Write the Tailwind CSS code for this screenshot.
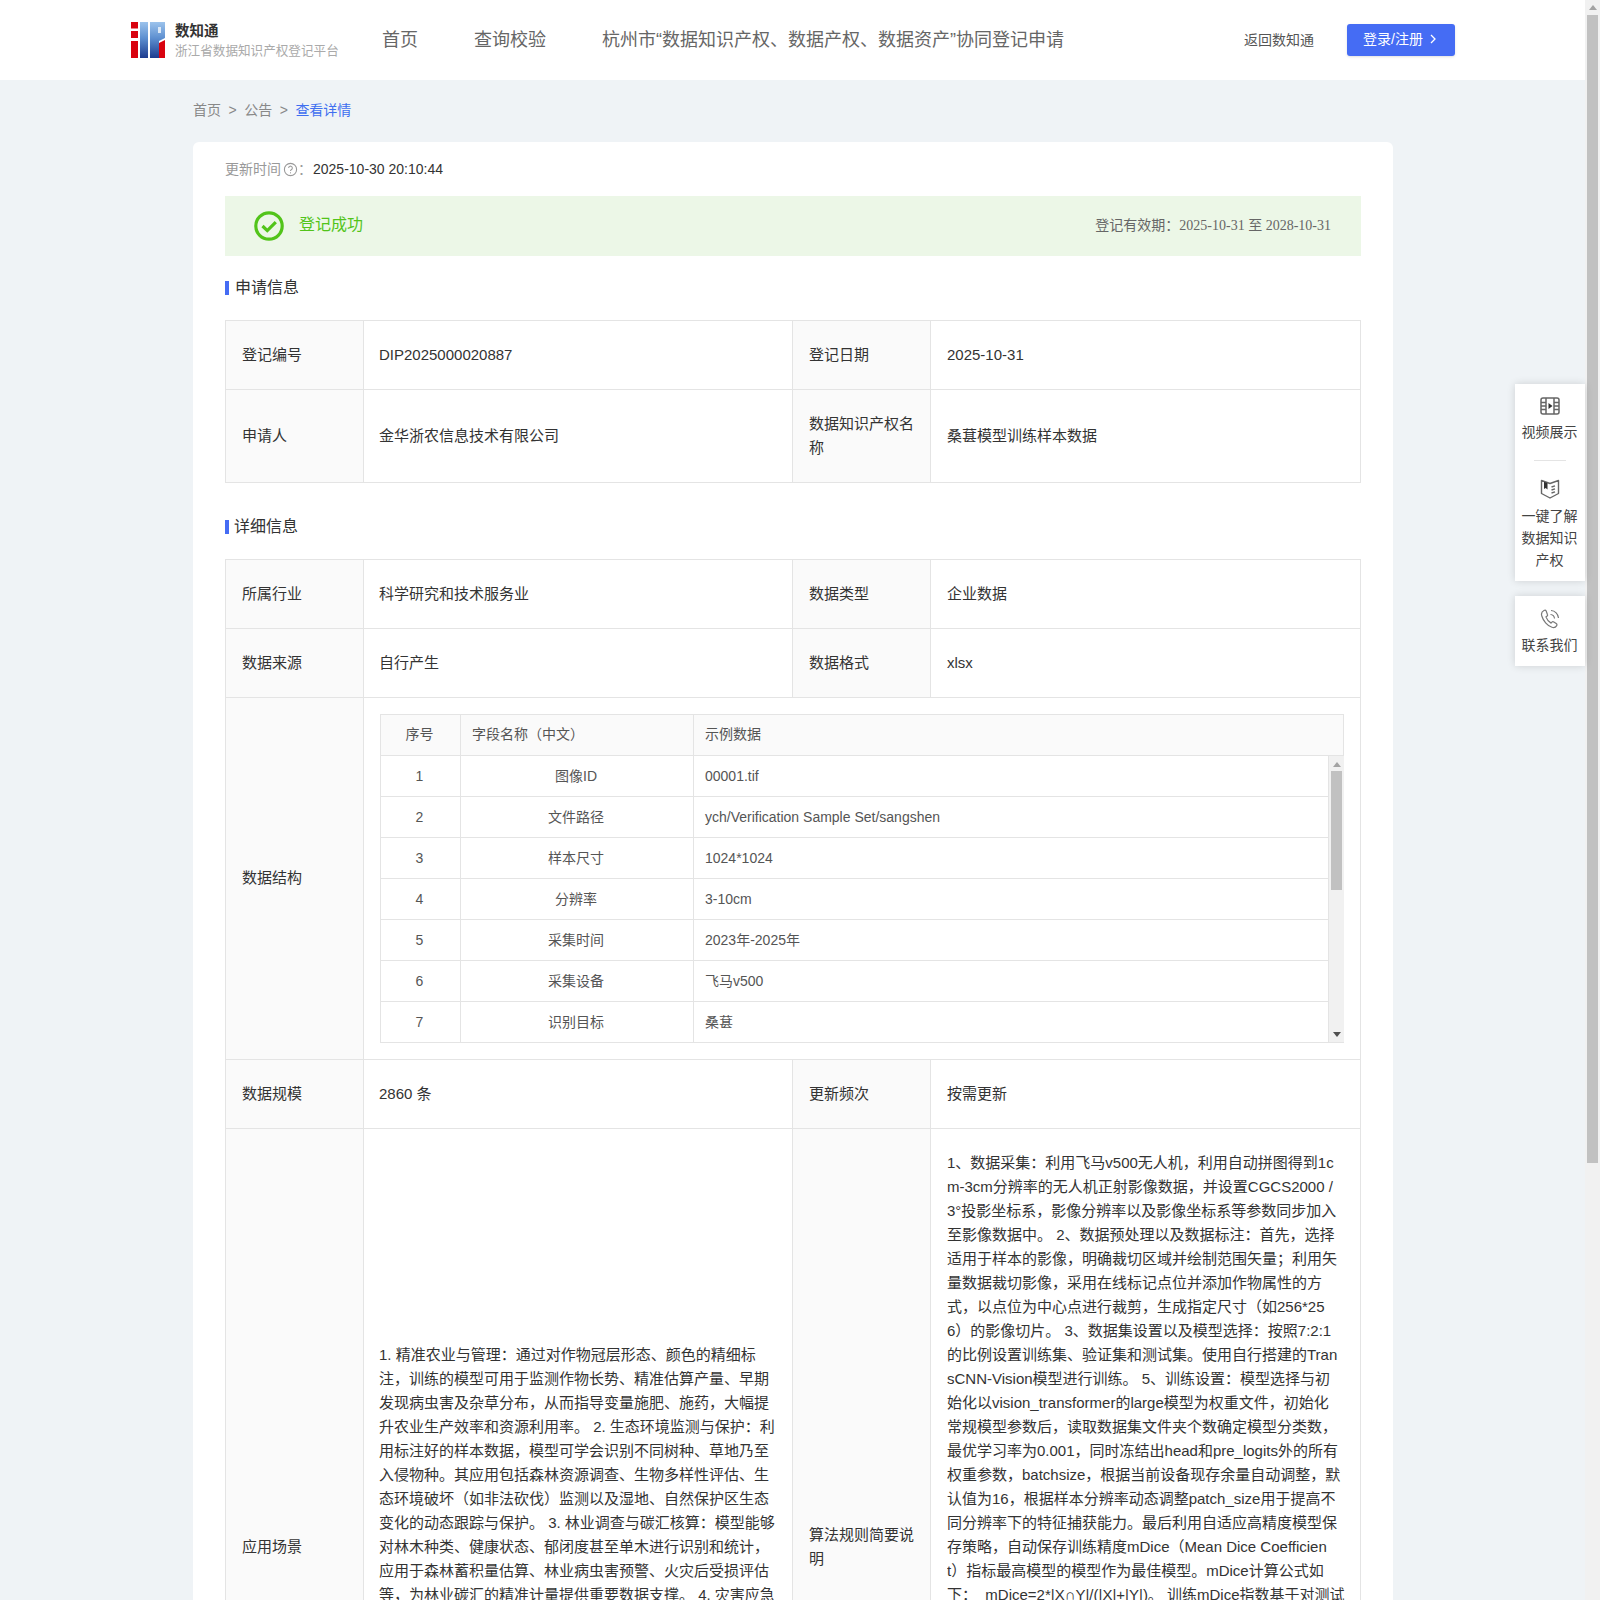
<!DOCTYPE html>
<html lang="zh-CN">
  <head>
    <meta charset="UTF-8" />
    <title>查看详情</title>
    <script src="https://cdn.jsdelivr.net/npm/@tailwindcss/browser@4"></script>
  </head>
  <body class="font-['Liberation_Sans','Noto_Sans_CJK_SC',sans-serif] text-[#333]">
    <div class="flex h-[1600px] overflow-hidden bg-[#eff3f6]">
      <div class="relative w-[1585px] shrink-0">
        <!-- header -->
        <header class="flex h-20 items-center bg-white pl-[131px] pr-[130px]">
          <svg width="34" height="36" viewBox="0 0 34 36">
            <defs>
              <linearGradient id="logoBlue" x1="0" y1="0" x2="0" y2="1">
                <stop offset="0" stop-color="#9cc3ec" />
                <stop offset="0.45" stop-color="#5d8fd0" />
                <stop offset="1" stop-color="#1d3c8f" />
              </linearGradient>
            </defs>
            <rect x="0" y="0" width="7" height="6.500" fill="#d9030f" />
            <rect x="0" y="9" width="7" height="7" fill="#d9030f" />
            <rect x="0" y="19" width="7" height="17" fill="#d9030f" />
            <rect x="9" y="0" width="8" height="36" fill="url(#logoBlue)" />
            <path d="M19 0h15v16l-6 3v17h-9z" fill="url(#logoBlue)" />
            <rect x="27" y="5" width="3" height="6" fill="#dbe8f7" />
            <path d="M28 21l6-3v18h-6z" fill="#d9030f" />
          </svg>
          <div class="ml-2.5 w-[164px] whitespace-nowrap">
            <div class="text-[14.5px] leading-[22px] font-bold text-[#333]">数知通</div>
            <div class="text-[12.6px] leading-[18px] text-[#aaa]">浙江省数据知识产权登记平台</div>
          </div>
          <nav class="ml-[43px] flex gap-14 text-lg text-[#666]">
            <a>首页</a>
            <a>查询校验</a>
            <a>杭州市“数据知识产权、数据产权、数据资产”协同登记申请</a>
          </nav>
          <a class="ml-auto text-sm text-[#555]">返回数知通</a>
          <button class="ml-[33px] flex h-8 w-[108px] items-center gap-[7px] rounded-[3px] bg-[#456cf4] pb-[2px] pl-4 text-sm text-white shadow-sm">
            登录/注册
            <svg width="6" height="10" viewBox="0 0 6 10" fill="none" stroke="currentColor" stroke-width="1.3"><path d="M1 1l4 4-4 4" /></svg>
          </button>
        </header>

        <main class="ml-[193px] w-[1200px]">
          <div class="flex h-[62px] items-center gap-[7.5px] pb-[2px] text-sm text-[#888]">
            <span>首页</span><span>&gt;</span><span>公告</span><span>&gt;</span>
            <span class="text-[#3f6ff0]">查看详情</span>
          </div>

          <section class="rounded-t-md bg-white px-8">
            <div class="flex h-[54px] items-center text-sm">
              <span class="text-[#999]">更新时间</span>
              <svg class="ml-0.5 text-[#999]" width="15" height="15" viewBox="0 0 14 14" fill="none" stroke="currentColor">
                <circle cx="7" cy="7" r="5.7" />
                <path d="M5.300 5.600a1.700 1.700 0 1 1 2.600 1.400c-.6.4-.9.7-.9 1.400" />
                <path d="M7 9.600v1" />
              </svg>
              <span class="w-[15px] text-[#999]">：</span>
              <span>2025-10-30 20:10:44</span>
            </div>

            <div class="flex h-[60px] items-center bg-[#ecf7e7] pl-[29px] pr-[30px]">
              <svg width="30" height="30" viewBox="0 0 30 30" fill="none" stroke="#52c41a">
                <circle cx="15" cy="15" r="13.2" stroke-width="3.2" />
                <path d="M8.500 15l4.800 4.600 8.500-8.400" stroke-width="3.2" />
              </svg>
              <span class="mb-[2px] ml-[15px] text-base text-[#52c41a]">登记成功</span>
              <span class="mb-[2px] ml-auto text-sm text-[#666]">登记有效期：<span class="font-['Liberation_Serif','Noto_Sans_CJK_SC',serif]">2025-10-31 至 2028-10-31</span></span>
            </div>

            <div class="flex h-[64px] items-start pt-5">
              <div class="mt-[5px] h-3.5 w-1 bg-[#456cf4]"></div>
              <h2 class="ml-[6px] text-base leading-6">申请信息</h2>
            </div>

            <div class="grid grid-cols-[138px_429px_138px_431px] grid-rows-[69px_93px] border-r border-b border-[#e4e4e4] text-[15px] leading-6">
              <div class="flex items-center border-t border-l border-[#e4e4e4] bg-[#fafafa] px-4">登记编号</div>
              <div class="flex items-center border-t border-l border-[#e4e4e4] pr-4 pl-[15px]">DIP2025000020887</div>
              <div class="flex items-center border-t border-l border-[#e4e4e4] bg-[#fafafa] px-4">登记日期</div>
              <div class="flex items-center border-t border-l border-[#e4e4e4] px-4">2025-10-31</div>
              <div class="flex items-center border-t border-l border-[#e4e4e4] bg-[#fafafa] px-4">申请人</div>
              <div class="flex items-center border-t border-l border-[#e4e4e4] pr-4 pl-[15px]">金华浙农信息技术有限公司</div>
              <div class="flex items-center border-t border-l border-[#e4e4e4] bg-[#fafafa] px-4">数据知识产权名称</div>
              <div class="flex items-center border-t border-l border-[#e4e4e4] px-4">桑葚模型训练样本数据</div>
            </div>

            <div class="flex h-[76px] items-start pt-8">
              <div class="mt-[5px] h-3.5 w-1 bg-[#456cf4]"></div>
              <h2 class="ml-[5px] text-base leading-6">详细信息</h2>
            </div>

            <div class="grid grid-cols-[138px_429px_138px_431px] grid-rows-[69px_69px_362px_69px_836px] border-r border-[#e4e4e4] text-[15px] leading-6">
              <div class="flex items-center border-t border-l border-[#e4e4e4] bg-[#fafafa] px-4">所属行业</div>
              <div class="flex items-center border-t border-l border-[#e4e4e4] pr-4 pl-[15px]">科学研究和技术服务业</div>
              <div class="flex items-center border-t border-l border-[#e4e4e4] bg-[#fafafa] px-4">数据类型</div>
              <div class="flex items-center border-t border-l border-[#e4e4e4] px-4">企业数据</div>

              <div class="flex items-center border-t border-l border-[#e4e4e4] bg-[#fafafa] px-4">数据来源</div>
              <div class="flex items-center border-t border-l border-[#e4e4e4] pr-4 pl-[15px]">自行产生</div>
              <div class="flex items-center border-t border-l border-[#e4e4e4] bg-[#fafafa] px-4">数据格式</div>
              <div class="flex items-center border-t border-l border-[#e4e4e4] px-4">xlsx</div>

              <div class="flex items-center border-t border-l border-[#e4e4e4] bg-[#fafafa] px-4 pb-[2px]">数据结构</div>
              <div class="col-span-3 border-t border-l border-[#e4e4e4] pt-4 pr-[17px] pl-4">
                <div class="border-t border-l border-[#e4e4e4] text-sm text-[#555]">
                  <div class="grid h-[41px] grid-cols-[79px_233px_1fr] border-b border-[#e4e4e4] bg-[#fafafa] leading-[39px]">
                    <div class="pr-0.5 text-center">序号</div>
                    <div class="border-l border-[#e4e4e4] pl-[11px]">字段名称（中文）</div>
                    <div class="border-l border-r border-[#e4e4e4] pl-[11px]">示例数据</div>
                  </div>
                  <div class="flex">
                    <div class="flex-1">
                      <div class="grid h-[41px] grid-cols-[79px_233px_1fr] border-b border-[#e4e4e4] leading-10">
                        <div class="pr-0.5 text-center">1</div>
                        <div class="border-l border-[#e4e4e4] pr-0.5 text-center">图像ID</div>
                        <div class="border-l border-[#e4e4e4] pl-[11px]">00001.tif</div>
                      </div>
                      <div class="grid h-[41px] grid-cols-[79px_233px_1fr] border-b border-[#e4e4e4] leading-10">
                        <div class="pr-0.5 text-center">2</div>
                        <div class="border-l border-[#e4e4e4] pr-0.5 text-center">文件路径</div>
                        <div class="border-l border-[#e4e4e4] pl-[11px]">ych/Verification Sample Set/sangshen</div>
                      </div>
                      <div class="grid h-[41px] grid-cols-[79px_233px_1fr] border-b border-[#e4e4e4] leading-10">
                        <div class="pr-0.5 text-center">3</div>
                        <div class="border-l border-[#e4e4e4] pr-0.5 text-center">样本尺寸</div>
                        <div class="border-l border-[#e4e4e4] pl-[11px]">1024*1024</div>
                      </div>
                      <div class="grid h-[41px] grid-cols-[79px_233px_1fr] border-b border-[#e4e4e4] leading-10">
                        <div class="pr-0.5 text-center">4</div>
                        <div class="border-l border-[#e4e4e4] pr-0.5 text-center">分辨率</div>
                        <div class="border-l border-[#e4e4e4] pl-[11px]">3-10cm</div>
                      </div>
                      <div class="grid h-[41px] grid-cols-[79px_233px_1fr] border-b border-[#e4e4e4] leading-10">
                        <div class="pr-0.5 text-center">5</div>
                        <div class="border-l border-[#e4e4e4] pr-0.5 text-center">采集时间</div>
                        <div class="border-l border-[#e4e4e4] pl-[11px]">2023年-2025年</div>
                      </div>
                      <div class="grid h-[41px] grid-cols-[79px_233px_1fr] border-b border-[#e4e4e4] leading-10">
                        <div class="pr-0.5 text-center">6</div>
                        <div class="border-l border-[#e4e4e4] pr-0.5 text-center">采集设备</div>
                        <div class="border-l border-[#e4e4e4] pl-[11px]">飞马v500</div>
                      </div>
                      <div class="grid h-[41px] grid-cols-[79px_233px_1fr] border-b border-[#e4e4e4] leading-10">
                        <div class="pr-0.5 text-center">7</div>
                        <div class="border-l border-[#e4e4e4] pr-0.5 text-center">识别目标</div>
                        <div class="border-l border-[#e4e4e4] pl-[11px]">桑葚</div>
                      </div>
                    </div>
                    <!-- inner scrollbar -->
                    <div class="flex h-[287px] w-[16px] flex-col items-center justify-between border-b border-l border-[#e4e4e4] bg-[#f1f1f1]">
                      <div class="mt-[6px] h-0 w-0 border-x-4 border-b-[5px] border-x-transparent border-b-[#a3a3a3]"></div>
                      <div class="mt-[4px] mb-auto h-[119px] w-[11px] bg-[#c1c1c1]"></div>
                      <div class="mb-[5px] h-0 w-0 border-x-4 border-t-[5px] border-x-transparent border-t-[#505050]"></div>
                    </div>
                  </div>
                </div>
              </div>

              <div class="flex items-center border-t border-l border-[#e4e4e4] bg-[#fafafa] px-4">数据规模</div>
              <div class="flex items-center border-t border-l border-[#e4e4e4] pr-4 pl-[15px]">2860 条</div>
              <div class="flex items-center border-t border-l border-[#e4e4e4] bg-[#fafafa] px-4">更新频次</div>
              <div class="flex items-center border-t border-l border-[#e4e4e4] px-4">按需更新</div>

              <div class="flex items-center border-t border-l border-[#e4e4e4] bg-[#fafafa] px-4">应用场景</div>
              <div class="flex items-center border-t border-l border-[#e4e4e4] pr-4 pl-[15px]">
                <p class="h-[408px] overflow-hidden whitespace-nowrap">
                  1. 精准农业与管理：通过对作物冠层形态、颜色的精细标<br />
                  注，训练的模型可用于监测作物长势、精准估算产量、早期<br />
                  发现病虫害及杂草分布，从而指导变量施肥、施药，大幅提<br />
                  升农业生产效率和资源利用率。 2. 生态环境监测与保护：利<br />
                  用标注好的样本数据，模型可学会识别不同树种、草地乃至<br />
                  入侵物种。其应用包括森林资源调查、生物多样性评估、生<br />
                  态环境破坏（如非法砍伐）监测以及湿地、自然保护区生态<br />
                  变化的动态跟踪与保护。 3. 林业调查与碳汇核算：模型能够<br />
                  对林木种类、健康状态、郁闭度甚至单木进行识别和统计，<br />
                  应用于森林蓄积量估算、林业病虫害预警、火灾后受损评估<br />
                  等，为林业碳汇的精准计量提供重要数据支撑。 4. 灾害应急
                </p>
              </div>
              <div class="flex items-center border-t border-l border-[#e4e4e4] bg-[#fafafa] px-4">算法规则简要说明</div>
              <div class="flex items-center border-t border-l border-[#e4e4e4] px-4">
                <p class="h-[792px] overflow-hidden whitespace-nowrap">
                  1、数据采集：利用飞马v500无人机，利用自动拼图得到1c<br />
                  m-3cm分辨率的无人机正射影像数据，并设置CGCS2000 /<br />
                  3°投影坐标系，影像分辨率以及影像坐标系等参数同步加入<br />
                  至影像数据中。 2、数据预处理以及数据标注：首先，选择<br />
                  适用于样本的影像，明确裁切区域并绘制范围矢量；利用矢<br />
                  量数据裁切影像，采用在线标记点位并添加作物属性的方<br />
                  式，以点位为中心点进行裁剪，生成指定尺寸（如256*25<br />
                  6）的影像切片。 3、数据集设置以及模型选择：按照7:2:1<br />
                  的比例设置训练集、验证集和测试集。使用自行搭建的Tran<br />
                  sCNN-Vision模型进行训练。 5、训练设置：模型选择与初<br />
                  始化以vision_transformer的large模型为权重文件，初始化<br />
                  常规模型参数后，读取数据集文件夹个数确定模型分类数，<br />
                  最优学习率为0.001，同时冻结出head和pre_logits外的所有<br />
                  权重参数，batchsize，根据当前设备现存余量自动调整，默<br />
                  认值为16，根据样本分辨率动态调整patch_size用于提高不<br />
                  同分辨率下的特征捕获能力。最后利用自适应高精度模型保<br />
                  存策略，自动保存训练精度mDice（Mean Dice Coefficien<br />
                  t）指标最高模型的模型作为最佳模型。mDice计算公式如<br />
                  下： &nbsp;mDice=2*|X∩Y|/(|X|+|Y|)。 训练mDice指数基于对测试
                </p>
              </div>
            </div>
          </section>
        </main>

        <!-- floating side widgets -->
        <aside class="absolute top-[384px] right-0 w-[70px] text-center text-sm leading-[22px] text-[#444]">
          <div class="h-[197px] bg-white pt-[13px] pr-px shadow-[0_0_8px_rgba(0,0,0,0.14)]">
            <svg class="mx-auto" width="20" height="18" viewBox="0 0 20 18" fill="none" stroke="#666" stroke-width="1.5">
              <rect x="1" y="1" width="18" height="16" rx="2" />
              <path d="M6 1v16M14 1v16M1 5.500h5M1 9h5M1 12.500h5M14 5.500h5M14 9h5M14 12.500h5" />
              <path d="M8.500 6l4 3-4 3z" fill="#333" stroke="none" />
            </svg>
            <div class="mt-[6px]">视频展示</div>
            <div class="mx-auto mt-[17px] h-px w-8 bg-[#e4e4e4]"></div>
            <svg class="mx-auto mt-[18px]" width="20" height="20" viewBox="0 0 20 20" fill="none" stroke="#666" stroke-width="1.4">
              <path d="M10 4.500L1.500 1.500V14.500L10 19l8.500-4.500V1.500z" stroke-linejoin="round" />
              <path d="M4 2.800l3.500 1.200v6.500L5.700 9 4 10z" fill="#333" stroke="none" />
              <path d="M11.500 8l3.500-1.200M11.500 11l3.500-1.200M11.500 14l3.500-1.200" />
            </svg>
            <div class="mt-[6px]">一键了解<br />数据知识<br />产权</div>
          </div>
          <div class="mt-[15px] h-[70px] bg-white pt-[13px] pr-px shadow-[0_0_8px_rgba(0,0,0,0.14)]">
            <svg class="mx-auto" width="20" height="20" viewBox="0 0 20 20" fill="none" stroke="#777" stroke-width="1.2">
              <path d="M4 1.500C2 2.500 1 4.500 1.800 7c1.300 4.500 5.500 9.800 10.200 11.300 2 .6 3.800-.2 4.700-1.700.4-.7.2-1.500-.5-2l-2.400-1.600c-.6-.4-1.400-.3-1.900.2l-.8.9c-2.400-1.300-4.300-3.700-5.200-6.200l1-.7c.6-.4.800-1.200.5-1.800L6.200 2c-.4-.7-1.400-.9-2.200-.5z" />
              <path d="M10.500 5.500a4.500 4.500 0 0 1 4 4" />
              <path d="M11 1.500a8 8 0 0 1 7.500 7.500" />
            </svg>
            <div class="mt-[5px]">联系我们</div>
          </div>
        </aside>
      </div>

      <!-- page scrollbar -->
      <div class="flex w-[15px] flex-col items-center bg-[#f1f1f1]">
        <div class="mt-[5px] h-0 w-0 border-x-4 border-b-[5px] border-x-transparent border-b-[#a3a3a3]"></div>
        <div class="mt-[5px] h-[1148px] w-[11px] bg-[#c1c1c1]"></div>
      </div>
    </div>
  </body>
</html>
